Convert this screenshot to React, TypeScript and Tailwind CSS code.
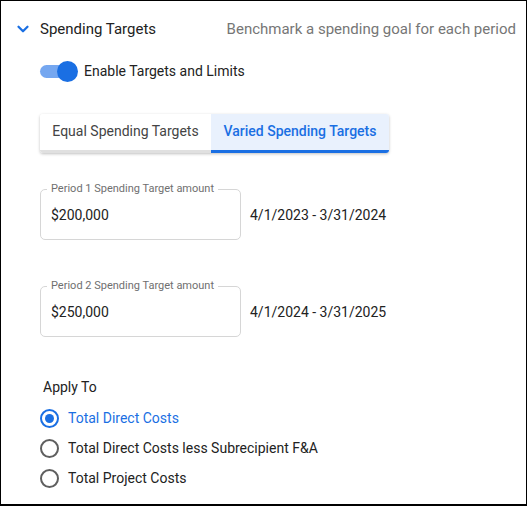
import { ChevronDown } from "lucide-react";

function AmountField({ label, value, range }: { label: string; value: string; range: string }) {
  return (
    <div className="flex items-center">
      <div className="relative flex h-[51px] w-[201px] items-center rounded-[5px] border border-[#d6d6d6] px-[10px] pt-[3px]">
        <span className="absolute -top-[8px] left-[6px] bg-white px-[4px] text-[11px] leading-[14px] text-[#6f6f6f]">
          {label}
        </span>
        <span className="text-[14px] text-[#222]">{value}</span>
      </div>
      <span className="ml-[9px] pt-[3px] text-[14px] text-[#222]">{range}</span>
    </div>
  );
}

function Radio({ label, checked }: { label: string; checked?: boolean }) {
  return (
    <div className="flex h-[30px] items-center">
      <span
        className={
          checked
            ? "flex h-[19px] w-[19px] items-center justify-center rounded-full border-2 border-[#1a6fe3]"
            : "flex h-[19px] w-[19px] items-center justify-center rounded-full border-2 border-[#5f5f5f]"
        }
      >
        {checked && <span className="h-[9px] w-[9px] rounded-full bg-[#1a6fe3]" />}
      </span>
      <span className={checked ? "ml-[9px] text-[14px] text-[#1a6fe3]" : "ml-[9px] text-[14px] text-[#222]"}>
        {label}
      </span>
    </div>
  );
}

export default function App() {
  return (
    <div
      className="h-[506px] w-[527px] border border-b-2 border-black bg-white"
      style={{ fontFamily: "Roboto, 'Liberation Sans', sans-serif" }}
    >
      <div className="flex items-center pt-[17px] pl-[13px] pr-[10px]">
        <ChevronDown className="h-[18px] w-[18px] text-[#1a6fe3]" strokeWidth={3} />
        <span className="ml-[8px] text-[15px] text-[#222]">Spending Targets</span>
        <span className="ml-auto text-[15px] text-[#767676]">Benchmark a spending goal for each period</span>
      </div>

      <div className="mt-[20px] flex items-center pl-[39px]">
        <div className="relative h-[20px] w-[38px]">
          <div className="absolute top-[4px] left-0 h-[13px] w-[34px] rounded-full bg-[#75a7f0]" />
          <div className="absolute top-0 right-0 h-[21px] w-[21px] rounded-full bg-[#1a6fe3]" />
        </div>
        <span className="ml-[6px] text-[14px] text-[#222]">Enable Targets and Limits</span>
      </div>

      <div className="mt-[32px] ml-[39px] flex h-[39px] w-[349px] overflow-hidden rounded-[3px] shadow-[0_1px_3px_rgba(0,0,0,0.25)]">
        <div className="flex w-[171px] items-center justify-center border-b-[3px] border-[#e0e0e0] bg-white text-[14px] text-[#444]">
          Equal Spending Targets
        </div>
        <div className="flex flex-1 items-center justify-center border-b-[3px] border-[#1a6fe3] bg-[#e9f1fd] text-[14px] font-medium text-[#1a6fe3]">
          Varied Spending Targets
        </div>
      </div>

      <div className="mt-[36px] flex flex-col gap-[46px] pl-[39px]">
        <AmountField label="Period 1 Spending Target amount" value="$200,000" range="4/1/2023 - 3/31/2024" />
        <AmountField label="Period 2 Spending Target amount" value="$250,000" range="4/1/2024 - 3/31/2025" />
      </div>

      <div className="mt-[40px] pl-[39px]">
        <div className="pl-[3px] text-[14px] text-[#222]">Apply To</div>
        <div className="mt-[6px] flex flex-col">
          <Radio label="Total Direct Costs" checked />
          <Radio label="Total Direct Costs less Subrecipient F&A" />
          <Radio label="Total Project Costs" />
        </div>
      </div>
    </div>
  );
}
